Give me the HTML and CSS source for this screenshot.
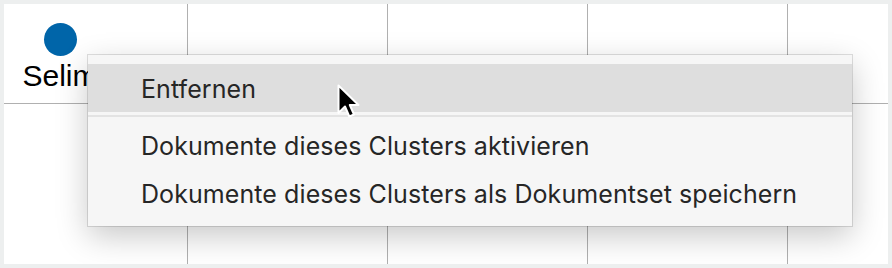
FILE: index.html
```html
<!DOCTYPE html>
<html lang="de">
<head>
    <meta charset="UTF-8">
    <title>Cluster-Ansicht</title>
    <link rel="stylesheet" href="styles.css">
</head>
<body>
<div class="canvas">
    <div class="cell">
        <div class="node">
            <span class="node-dot"></span>
            <span class="node-label">Selim</span>
        </div>
    </div>
    <div class="cell"></div>
    <div class="cell"></div>
    <div class="cell"></div>
    <div class="cell last"></div>
    <div class="cell bottom"></div>
    <div class="cell bottom"></div>
    <div class="cell bottom"></div>
    <div class="cell bottom"></div>
    <div class="cell bottom last"></div>

    <ul class="context-menu">
        <li class="menu-item hover">Entfernen</li>
        <li class="menu-sep"></li>
        <li class="menu-item">Dokumente dieses Clusters aktivieren</li>
        <li class="menu-item">Dokumente dieses Clusters als Dokumentset speichern</li>
    </ul>

    <svg class="cursor" width="24" height="36" viewBox="0 0 24 36">
        <path d="M1.5 1.5 L1.5 29 L8 22.5 L12.3 32.5 L17 30.5 L12.8 21 L21.5 21 Z" fill="#000" stroke="#fff" stroke-width="2" stroke-linejoin="round"/>
    </svg>
</div>
</body>
</html>
```

FILE: styles.css
```css
body { margin: 0; padding: 4px; background: #edefef; font-family: "Liberation Sans", Arial, sans-serif; }
.canvas {
    position: relative; width: 884px; height: 260px; background: #fff; overflow: hidden;
    display: grid; grid-template-columns: 184px 200px 200px 200px 1fr; grid-template-rows: 100px 1fr;
}
.cell { border-right: 1px solid #b0b0b0; border-bottom: 1px solid #b0b0b0; }
.cell.last { border-right: none; }
.cell.bottom { border-bottom: none; }

.node { display: flex; flex-direction: column; align-items: center; width: 112px; padding-top: 19px; }
.node-dot { width: 33px; height: 33px; border-radius: 50%; background: #0065a9; }
.node-label { font-size: 30px; line-height: 34px; color: #000; margin-top: 3px; }

.context-menu {
    position: absolute; left: 84px; top: 51px; width: 764px; height: 171px; box-sizing: border-box;
    margin: 0; padding: 9px 0; list-style: none; background: #f6f6f6;
    box-shadow: 0 0 0 1px rgba(0,0,0,0.12), 0 10px 30px rgba(0,0,0,0.22);
    font-family: Inter, "Open Sans", sans-serif; font-size: 25px; letter-spacing: 0.08px; color: #262626;
}
.menu-item { height: 48px; line-height: 48px; padding-left: 53px; box-sizing: border-box; padding-top: 2px; line-height: 46px; }
.menu-item.hover { background: #dedede; }
.menu-sep { height: 2px; margin: 3px 0 4px; background: #e3e3e3; }

.cursor { position: absolute; left: 333px; top: 80px; }
```
